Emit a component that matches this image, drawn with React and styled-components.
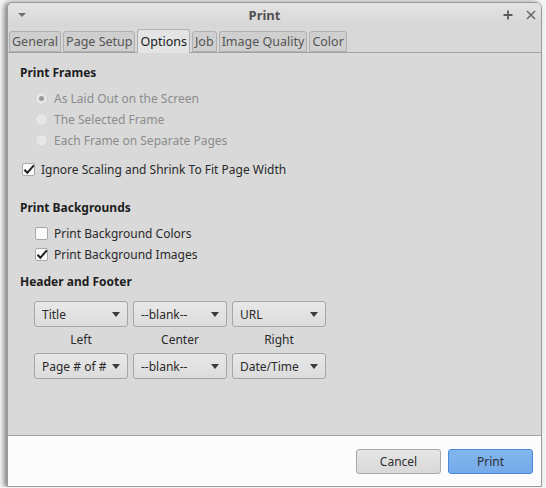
import React from 'react'
import styled, { createGlobalStyle } from 'styled-components'

const GlobalStyle = createGlobalStyle`
  html, body {
    margin: 0;
    padding: 0;
    background: #f4f4f4;
    font-family: "Noto Sans", "Open Sans", sans-serif;
    font-size: 12px;
    color: #2e2e2e;
  }
`;

const TABS = ['General', 'Page Setup', 'Options', 'Job', 'Image Quality', 'Color'];
const ACTIVE_TAB = 'Options';

const FRAMES = [
  { label: 'As Laid Out on the Screen', checked: true },
  { label: 'The Selected Frame', checked: false },
  { label: 'Each Frame on Separate Pages', checked: false },
];

const HEADER_ROW = ['Title', '--blank--', 'URL'];
const FOOTER_ROW = ['Page # of #', '--blank--', 'Date/Time'];
const POSITIONS = ['Left', 'Center', 'Right'];

function Check() {
  return (
    <svg width="12" height="11" viewBox="0 0 12 11">
      <path d="M1.5 5.8 L4.3 8.8 L10.8 1.4" fill="none" stroke="#1e1e1e" strokeWidth="2" />
    </svg>
  )
}

function Checkbox({ checked, children }) {
  return (
    <CheckRow>
      <CheckBox>{checked && <Check />}</CheckBox>
      <span>{children}</span>
    </CheckRow>
  )
}

function Combo({ value }) {
  return (
    <ComboBox>
      <span>{value}</span>
      <Arrow />
    </ComboBox>
  )
}

export default function App() {
  return (
    <>
      <GlobalStyle />
      <Window>
        <TitleBar>
          <MenuArrow />
          <Title>Print</Title>
          <TitleButtons>
            <svg width="10" height="10" viewBox="0 0 10 10">
              <path d="M5 0.5 V9.5 M0.5 5 H9.5" stroke="#5a5a5a" strokeWidth="1.8" />
            </svg>
            <svg width="10" height="10" viewBox="0 0 10 10">
              <path d="M1 1 L9 9 M9 1 L1 9" stroke="#6a6a6a" strokeWidth="1.6" />
            </svg>
          </TitleButtons>
        </TitleBar>

        <TabStrip>
          {TABS.map(t => (
            <Tab key={t} active={t === ACTIVE_TAB}>{t}</Tab>
          ))}
        </TabStrip>

        <Panel>
          <SectionTitle>Print Frames</SectionTitle>
          <OptionList top={6}>
            {FRAMES.map(f => (
              <RadioRow key={f.label}>
                <Radio>{f.checked && <Dot />}</Radio>
                <span>{f.label}</span>
              </RadioRow>
            ))}
          </OptionList>
          <Shallow>
            <Checkbox checked>Ignore Scaling and Shrink To Fit Page Width</Checkbox>
          </Shallow>

          <SectionTitle top={19}>Print Backgrounds</SectionTitle>
          <OptionList top={6}>
            <Checkbox>Print Background Colors</Checkbox>
            <Checkbox checked>Print Background Images</Checkbox>
          </OptionList>

          <SectionTitle top={8}>Header and Footer</SectionTitle>
          <ComboGrid>
            {HEADER_ROW.map((v, i) => <Combo key={'h' + i} value={v} />)}
            {POSITIONS.map(p => <PosLabel key={p}>{p}</PosLabel>)}
            {FOOTER_ROW.map((v, i) => <Combo key={'f' + i} value={v} />)}
          </ComboGrid>
        </Panel>

        <Footer>
          <Button>Cancel</Button>
          <Button primary>Print</Button>
        </Footer>
      </Window>
    </>
  )
}

/* styles */
const Window = styled.div`
  margin: 2px 0 0 7px;
  width: 535px;
  height: 485px;
  display: flex;
  flex-direction: column;
  background: #fcfcfc;
  border: 1px solid #9a9a9a;
  border-radius: 6px 6px 0 0;
  box-sizing: border-box;
  box-shadow: -3px 0 5px rgba(0, 0, 0, 0.45);
  overflow: hidden;
`;

const TitleBar = styled.div`
  height: 24px;
  display: flex;
  align-items: center;
  padding: 0 5px 0 8px;
  background: linear-gradient(#e4e4e4, #d6d6d6);
`;

const MenuArrow = styled.div`
  width: 0;
  height: 0;
  border-left: 4px solid transparent;
  border-right: 4px solid transparent;
  border-top: 4px solid #707070;
  margin-left: 2px;
`;

const Title = styled.div`
  flex: 1;
  text-align: center;
  font-size: 13px;
  font-weight: bold;
  color: #505050;
`;

const TitleButtons = styled.div`
  display: flex;
  gap: 13px;
  align-items: center;
`;

const TabStrip = styled.div`
  display: flex;
  align-items: flex-end;
  gap: 2px;
  height: 25px;
  background: #d8d8d8;
  padding-left: 1px;
  border-bottom: 1px solid #a2a2a2;
`;

const Tab = styled.div`
  height: ${p => (p.active ? 24 : 21)}px;
  margin-bottom: ${p => (p.active ? -1 : 0)}px;
  padding: 0 2px;
  display: flex;
  align-items: center;
  box-sizing: border-box;
  border: 1px solid #b0b0b0;
  border-bottom: ${p => (p.active ? 'none' : '1px solid #b0b0b0')};
  border-radius: 3px 3px 0 0;
  background: ${p => (p.active ? '#e4e4e4' : '#cfcfcf')};
  color: ${p => (p.active ? '#1a1a1a' : '#555')};
  font-size: 12.5px;
`;

const Panel = styled.div`
  flex: 1;
  background: #d9d9d9;
  border-bottom: 1px solid #a2a2a2;
  padding: 11px 12px 0 12px;
`;

const SectionTitle = styled.div`
  font-weight: bold;
  color: #1e1e1e;
  margin-top: ${p => p.top || 0}px;
  height: 18px;
  line-height: 18px;
`;

const OptionList = styled.div`
  display: flex;
  flex-direction: column;
  padding: ${p => p.top || 0}px 0 0 15px;
`;

const Shallow = styled.div`
  padding: 8px 0 0 2px;
`;

const RadioRow = styled.div`
  display: flex;
  align-items: center;
  height: 21px;
  color: #8c8c8c;
`;

const Radio = styled.div`
  width: 13px;
  height: 13px;
  border-radius: 50%;
  background: #e6e6e6;
  border: 1px solid #d2d2d2;
  box-sizing: border-box;
  display: flex;
  align-items: center;
  justify-content: center;
  margin-right: 6px;
`;

const Dot = styled.div`
  width: 5px;
  height: 5px;
  border-radius: 50%;
  background: #9a9a9a;
`;

const CheckRow = styled.div`
  display: flex;
  align-items: center;
  height: 21px;
  color: #2a2a2a;
`;

const CheckBox = styled.div`
  width: 13px;
  height: 13px;
  box-sizing: border-box;
  border: 1px solid #a8a8a8;
  border-radius: 2px;
  background: #fafafa;
  display: flex;
  align-items: center;
  justify-content: center;
  margin-right: 6px;
  & svg { flex: none; }
`;

const ComboGrid = styled.div`
  display: grid;
  grid-template-columns: repeat(3, 94px);
  grid-template-rows: 26px 26px 26px;
  column-gap: 5px;
  margin: 10px 0 0 14px;
`;

const ComboBox = styled.div`
  display: flex;
  align-items: center;
  justify-content: space-between;
  padding: 0 7px 0 7px;
  box-sizing: border-box;
  height: 26px;
  border: 1px solid #a6a6a6;
  border-radius: 3px;
  background: linear-gradient(#e8e8e8, #dcdcdc);
  color: #2a2a2a;
  white-space: nowrap;
`;

const Arrow = styled.div`
  width: 0;
  height: 0;
  border-left: 4px solid transparent;
  border-right: 4px solid transparent;
  border-top: 5px solid #3a3a3a;
  margin-left: 4px;
`;

const PosLabel = styled.div`
  text-align: center;
  line-height: 26px;
  color: #2a2a2a;
`;

const Footer = styled.div`
  height: 50px;
  display: flex;
  justify-content: flex-end;
  align-items: center;
  gap: 7px;
  padding-right: 8px;
  background: #fcfcfc;
`;

const Button = styled.button`
  width: 85px;
  height: 25px;
  font-family: inherit;
  font-size: 12px;
  border-radius: 3px;
  border: 1px solid ${p => (p.primary ? '#4a89d6' : '#a8a8a8')};
  background: ${p => (p.primary ? 'linear-gradient(#82b6ee, #74aaea)' : 'linear-gradient(#e6e6e6, #d8d8d8)')};
  color: #2e2e2e;
  padding: 0;
`;
